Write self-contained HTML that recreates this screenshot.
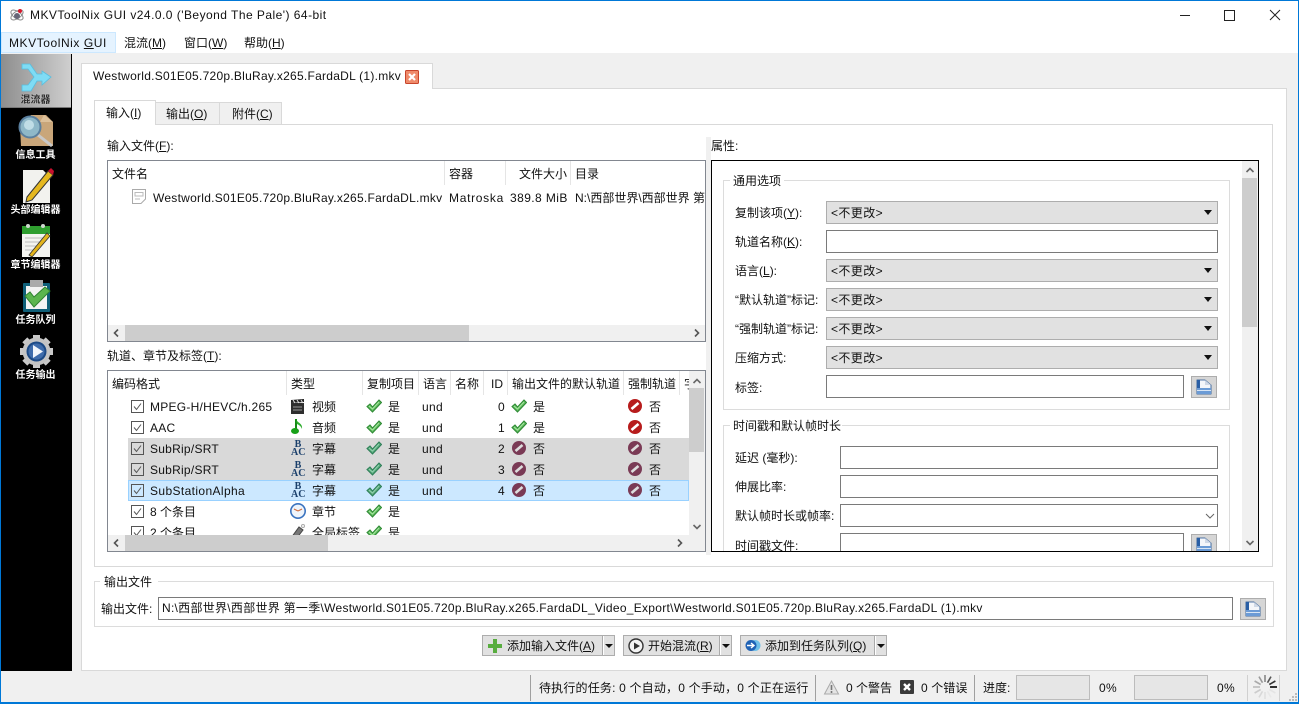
<!DOCTYPE html>
<html><head><meta charset="utf-8"><title>MKVToolNix GUI</title>
<style>
html,body{margin:0;padding:0;width:1299px;height:704px;overflow:hidden;background:#f0f0f0}
body{position:relative;font-family:"Liberation Sans","Noto Sans CJK SC",sans-serif;font-size:12px;color:#111}
.a{position:absolute;box-sizing:border-box}
.t{position:absolute;white-space:nowrap;line-height:16px;font-size:12px;color:#111}
.tr .t{margin-top:1px}
.l{position:absolute;left:0;top:0;width:1299px;height:704px}
.s{position:absolute;left:0;width:71px;text-align:center;font-size:10px;line-height:13px;color:#fff;font-weight:bold;white-space:nowrap}
.c{position:absolute;box-sizing:border-box;left:826px;width:392px;height:23px;background:#e1e1e1;border:1px solid #adadad}
.c span{position:absolute;left:4px;top:3px;line-height:16px;font-size:12px;letter-spacing:.4px}
.c i{position:absolute;right:5px;top:8px;width:0;height:0;border:4px solid transparent;border-top:5px solid #111;border-bottom:0}
.i{position:absolute;box-sizing:border-box;height:23px;background:#fff;border:1px solid #7a7a7a}
.b{position:absolute;box-sizing:border-box;background:#e1e1e1;border:1px solid #adadad}
.bb{position:absolute;box-sizing:border-box;background:#d6d6d6;border:1px solid #adadad}
.sep{position:absolute;width:1px;background:#e5e5e5}
.ck{position:absolute;box-sizing:border-box;width:13px;height:13px;border:1px solid #555;background:transparent}
.g{position:absolute;box-sizing:border-box;border:1px solid #dcdcdc}
.ac{position:absolute;left:291px;width:14px;text-align:center;white-space:nowrap;font:bold 10px/8px "Liberation Serif",serif;color:#1a3f6b}
svg{position:absolute;overflow:visible}
u{text-underline-offset:1px}
</style></head><body>
<svg width="0" height="0" style="position:absolute">
<defs>
<symbol id="yes" viewBox="0 0 16 14"><path d="M1 7.5 L4 5 L6.5 8 L13 1 L15.5 3.5 L6.5 13 Z" fill="#5cb85c" stroke="#2f8a35" stroke-width="1"/><path d="M3 7 L6.5 10 L13 3" fill="none" stroke="#a8e8a0" stroke-width="1"/></symbol>
<symbol id="yesg" viewBox="0 0 16 14"><path d="M1 7.5 L4 5 L6.5 8 L13 1 L15.5 3.5 L6.5 13 Z" fill="#55a878" stroke="#2e7f58" stroke-width="1"/><path d="M3 7 L6.5 10 L13 3" fill="none" stroke="#95d2b0" stroke-width="1"/></symbol>
<symbol id="no" viewBox="0 0 14 14"><circle cx="7" cy="7" r="7" fill="#b71c1c"/><path d="M3.5 10 L10.5 4" stroke="#fff" stroke-width="2.6"/></symbol>
<symbol id="nog" viewBox="0 0 14 14"><circle cx="7" cy="7" r="7" fill="#7a3a55"/><path d="M3.5 10 L10.5 4" stroke="#ddd" stroke-width="2.6"/></symbol>
<symbol id="br" viewBox="0 0 16 16"><path d="M1 1 H9 L15 6 V15 H1 Z" fill="#f4f6fa" stroke="#1f4f8e" stroke-width="0.8"/><path d="M1 1 H4 V9 H1 Z" fill="#2a5fa5"/><path d="M9 1 L9 6 L15 6 Z" fill="#cfd8e6"/><path d="M1 9 H15 V15 H1 Z" fill="#6b9bd6"/><path d="M1 11.5 H15" stroke="#d9e6f5" stroke-width="1"/></symbol>
</defs>
</svg>

<!-- frame -->
<div class="a" style="left:0;top:0;width:1299px;height:32px;background:#fff"></div>
<div class="a" style="left:0;top:32px;width:1299px;height:21px;background:#fff"></div>
<div class="a" style="left:1px;top:32px;width:115px;height:21px;background:#e5f3ff;border:1px solid #cce8ff"></div>

<svg style="left:9px;top:7px" width="16" height="16" viewBox="0 0 16 16"><ellipse cx="8" cy="8" rx="7" ry="3.5" fill="none" stroke="#888" transform="rotate(35 8 8)"/><ellipse cx="8" cy="8" rx="7" ry="3.5" fill="none" stroke="#888" transform="rotate(-35 8 8)"/><circle cx="8" cy="9" r="3" fill="#667"/><circle cx="11" cy="4" r="2" fill="#d8182c"/></svg>
<div class="t" style="left:30px;top:7px;letter-spacing:.465px">MKVToolNix GUI v24.0.0 ('Beyond The Pale') 64-bit</div>
<svg style="left:1170px;top:0" width="129" height="32" viewBox="0 0 129 32"><path d="M10 15.5 H20" stroke="#222"/><path d="M54.5 10.5 h10 v10 h-10 z" fill="none" stroke="#222"/><path d="M100 10 L110 20 M110 10 L100 20" stroke="#222"/></svg>

<div class="t" style="left:9px;top:35px;letter-spacing:.56px">MKVToolNix <u>G</u>UI</div>
<div class="t" style="left:124px;top:35px">混流(<u>M</u>)</div>
<div class="t" style="left:184px;top:35px">窗口(<u>W</u>)</div>
<div class="t" style="left:244px;top:35px">帮助(<u>H</u>)</div>

<!-- sidebar -->
<div class="a" style="left:1px;top:54px;width:71px;height:617px;background:#000"></div>
<div class="a" style="left:1px;top:54px;width:70px;height:54px;background:linear-gradient(90deg,#8e8e8e,#cfcfcf);border-bottom:1px solid #777"></div>
<svg style="left:0;top:0" width="72" height="100" viewBox="0 0 72 100"><path d="M22 64 H30 L37 74 H42 V71 L51 77 L42 85 V81 H37 L31 91 H22 V85 H28 L34 77 L28 69 H22 Z" fill="#7fdcf5" stroke="#55bfe0" stroke-width=".8"/></svg>
<div class="s" style="top:94px;color:#2c2c2c;text-shadow:0 0 1px #eee">混流器</div>

<svg style="left:18px;top:114px" width="36" height="35" viewBox="0 0 36 35"><path d="M13 1 H28 L35 8 V32 H3 L2 13 Z" fill="#c9a67a"/><path d="M26 1 L35 8 H22 Z" fill="#dcc09a"/><path d="M20 21 L34 32" stroke="#c8c8c8" stroke-width="3"/><circle cx="12" cy="13" r="10.5" fill="#8fb8c8" stroke="#5a7f9e" stroke-width="2"/><circle cx="11" cy="11" r="5" fill="#c0dde6"/></svg>
<div class="s" style="top:149px">信息工具</div>

<svg style="left:21px;top:167px" width="34" height="36" viewBox="0 0 34 36"><path d="M2 3 H22 L29 10 V36 H2 Z" fill="#f2f2ee"/><path d="M6 30 L27 4 L32 8 L11 33 L5 35 Z" fill="#e5b820" stroke="#333" stroke-width="1"/><path d="M27 4 L32 8 L33 4 L30 1 Z" fill="#c8102e"/></svg>
<div class="s" style="top:204px">头部编辑器</div>

<svg style="left:21px;top:224px" width="31" height="33" viewBox="0 0 31 33"><rect x="1" y="2" width="28" height="31" fill="#f4f4f0"/><rect x="1" y="2" width="28" height="8" fill="#2f9e2f"/><circle cx="7" cy="2" r="2" fill="#cfd8cf"/><circle cx="22" cy="2" r="2" fill="#cfd8cf"/><path d="M4 14 H26 M4 18 H24 M4 22 H20 M4 26 H17" stroke="#bbb"/><path d="M8 31 L26 9 L29 12 L11 33 Z" fill="#e3b41c" stroke="#333" stroke-width=".8"/></svg>
<div class="s" style="top:259px">章节编辑器</div>

<svg style="left:21px;top:279px" width="31" height="34" viewBox="0 0 31 34"><rect x="2" y="4" width="27" height="29" fill="#0f5f78" rx="1"/><rect x="5" y="7" width="21" height="23" fill="#f3f3f3"/><rect x="9" y="1" width="13" height="7" fill="#aaa"/><path d="M4 17 L9 13 L13 18 L24 8 L29 12 L13 28 Z" fill="#5bb54e" stroke="#2f8230"/></svg>
<div class="s" style="top:314px">任务队列</div>

<svg style="left:19px;top:334px" width="35" height="35" viewBox="0 0 35 35"><path d="M17.5 1 V34 M1 17.5 H34 M5.8 5.8 L29.2 29.2 M29.2 5.8 L5.8 29.2" stroke="#c9c9c9" stroke-width="7"/><circle cx="17.5" cy="17.5" r="14" fill="#c4c4c4"/><circle cx="17.5" cy="17.5" r="10" fill="#1c4a86"/><circle cx="17.5" cy="17.5" r="8" fill="#3f6cab"/><path d="M14 11 L24 17.5 L14 24 Z" fill="#f2f6fb"/></svg>
<div class="s" style="top:369px">任务输出</div>

<!-- main tab -->
<div class="a" style="left:81px;top:88px;width:1206px;height:583px;background:#fff;border:1px solid #d9d9d9"></div>
<div class="a" style="left:81px;top:63px;width:352px;height:26px;background:#fff;border:1px solid #d9d9d9;border-bottom:0"></div>
<div class="t" style="left:93px;top:68px;letter-spacing:.26px">Westworld.S01E05.720p.BluRay.x265.FardaDL (1).mkv</div>
<svg style="left:405px;top:70px" width="14" height="14" viewBox="0 0 14 14"><rect x=".5" y=".5" width="13" height="13" rx="1" fill="#ef8a6a" stroke="#c8452b"/><path d="M4 4 L10 10 M10 4 L4 10" stroke="#fff" stroke-width="2.2"/></svg>

<!-- inner tabs -->
<div class="a" style="left:94px;top:124px;width:1179px;height:443px;background:#fff;border:1px solid #d9d9d9"></div>
<div class="a" style="left:155px;top:102px;width:65px;height:23px;background:#f0f0f0;border:1px solid #d9d9d9"></div>
<div class="a" style="left:219px;top:102px;width:63px;height:23px;background:#f0f0f0;border:1px solid #d9d9d9"></div>
<div class="a" style="left:94px;top:100px;width:62px;height:25px;background:#fff;border:1px solid #d9d9d9;border-bottom:0"></div>
<div class="t" style="left:106px;top:105px">输入(<u>I</u>)</div>
<div class="t" style="left:166px;top:106px">输出(<u>O</u>)</div>
<div class="t" style="left:232px;top:106px">附件(<u>C</u>)</div>

<!-- splitter -->
<div class="a" style="left:706px;top:137px;width:5px;height:418px;background:#f0f0f0"></div>

<!-- input files -->
<div class="t" style="left:107px;top:138px">输入文件(<u>F</u>):</div>
<div class="a" style="left:107px;top:160px;width:599px;height:182px;background:#fff;border:1px solid #828790"></div>
<div class="sep" style="left:444px;top:161px;height:24px"></div>
<div class="sep" style="left:505px;top:161px;height:24px"></div>
<div class="sep" style="left:570px;top:161px;height:24px"></div>
<div class="t" style="left:112px;top:166px">文件名</div>
<div class="t" style="left:449px;top:166px">容器</div>
<div class="t" style="left:519px;top:166px">文件大小</div>
<div class="t" style="left:575px;top:166px">目录</div>
<svg style="left:132px;top:189px" width="14" height="15" viewBox="0 0 14 15"><path d="M.5 .5 H13.5 V10 L9 14.5 H.5 Z" fill="#fff" stroke="#aaa"/><path d="M3 3.5 H11 V7 H3 Z" fill="none" stroke="#bbb"/><path d="M3 10 H8" stroke="#bbb"/></svg>
<div class="t" style="left:153px;top:190px;letter-spacing:.26px">Westworld.S01E05.720p.BluRay.x265.FardaDL.mkv</div>
<div class="t" style="left:449px;top:190px;letter-spacing:.7px">Matroska</div>
<div class="t" style="left:510px;top:190px;letter-spacing:.42px">389.8 MiB</div>
<div class="l" style="clip-path:inset(161px 594px 500px 570px)"><div class="t" style="left:575px;top:190px">N:\西部世界\西部世界 第一季\Westworld</div></div>
<div class="a" style="left:108px;top:325px;width:597px;height:16px;background:#f0f0f0"></div>
<div class="a" style="left:125px;top:325px;width:344px;height:16px;background:#cdcdcd"></div>
<svg style="left:113px;top:329px" width="6" height="8" viewBox="0 0 6 8"><path d="M5 .5 L1.5 4 L5 7.5" fill="none" stroke="#555" stroke-width="1.6"/></svg>
<svg style="left:694px;top:329px" width="6" height="8" viewBox="0 0 6 8"><path d="M1 .5 L4.5 4 L1 7.5" fill="none" stroke="#555" stroke-width="1.6"/></svg>

<!-- tracks -->
<div class="t" style="left:107px;top:348px">轨道、章节及标签(<u>T</u>):</div>
<div class="a" style="left:107px;top:370px;width:599px;height:182px;background:#fff;border:1px solid #828790"></div>
<div class="a" style="left:128px;top:438px;width:561px;height:42px;background:#d9d9d9"></div>
<div class="a" style="left:128px;top:480px;width:561px;height:21px;background:#cce8ff;border:1px solid #99d1ff"></div>
<div class="l tr" style="clip-path:inset(371px 610px 169px 108px)">
<div class="sep" style="left:286px;top:371px;height:24px"></div>
<div class="sep" style="left:362px;top:371px;height:24px"></div>
<div class="sep" style="left:418px;top:371px;height:24px"></div>
<div class="sep" style="left:450px;top:371px;height:24px"></div>
<div class="sep" style="left:483px;top:371px;height:24px"></div>
<div class="sep" style="left:507px;top:371px;height:24px"></div>
<div class="sep" style="left:623px;top:371px;height:24px"></div>
<div class="sep" style="left:679px;top:371px;height:24px"></div>
<div class="t" style="left:112px;top:375px">编码格式</div>
<div class="t" style="left:291px;top:375px">类型</div>
<div class="t" style="left:367px;top:375px">复制项目</div>
<div class="t" style="left:423px;top:375px">语言</div>
<div class="t" style="left:455px;top:375px">名称</div>
<div class="t" style="left:491px;top:375px">ID</div>
<div class="t" style="left:512px;top:375px">输出文件的默认轨道</div>
<div class="t" style="left:628px;top:375px">强制轨道</div>
<div class="t" style="left:684px;top:375px">字幕</div>

<!-- checkboxes -->
<div class="ck" style="left:131px;top:400px"></div><div class="ck" style="left:131px;top:421px"></div><div class="ck" style="left:131px;top:442px"></div><div class="ck" style="left:131px;top:463px"></div><div class="ck" style="left:131px;top:484px"></div><div class="ck" style="left:131px;top:505px"></div><div class="ck" style="left:131px;top:526px"></div>
<svg style="left:131px;top:400px" width="13" height="139" viewBox="0 0 13 139" fill="none" stroke="#555" stroke-width="1"><path d="M3 6.5 L5.5 9.5 L10 3.5"/><path d="M3 27.5 L5.5 30.5 L10 24.5"/><path d="M3 48.5 L5.5 51.5 L10 45.5"/><path d="M3 69.5 L5.5 72.5 L10 66.5"/><path d="M3 90.5 L5.5 93.5 L10 87.5"/><path d="M3 111.5 L5.5 114.5 L10 108.5"/><path d="M3 132.5 L5.5 135.5 L10 129.5"/></svg>

<div class="t" style="left:150px;top:398px;letter-spacing:.25px">MPEG-H/HEVC/h.265</div>
<div class="t" style="left:150px;top:419px;letter-spacing:.25px">AAC</div>
<div class="t" style="left:150px;top:440px;letter-spacing:.25px">SubRip/SRT</div>
<div class="t" style="left:150px;top:461px;letter-spacing:.25px">SubRip/SRT</div>
<div class="t" style="left:150px;top:482px;letter-spacing:.38px">SubStationAlpha</div>
<div class="t" style="left:150px;top:503px">8 个条目</div>
<div class="t" style="left:150px;top:524px">2 个条目</div>

<!-- type icons -->
<svg style="left:291px;top:399px" width="14" height="15" viewBox="0 0 14 15"><rect x="0" y="4" width="13" height="11" fill="#2e2e2e"/><path d="M0 1 L13 0 V3 L0 4 Z" fill="#222"/><path d="M2 1 L4 4 M6 1 L8 4 M10 1 L12 4" stroke="#ddd"/><path d="M2 8 H11 M2 11 H11" stroke="#999"/></svg>
<svg style="left:291px;top:418px" width="14" height="17" viewBox="0 0 14 17"><path d="M5 1 V12" stroke="#178a17" stroke-width="2"/><path d="M5 1 C6 5 12 5 11 11 C10 8 8 7 6 6" fill="#2fae2f"/><ellipse cx="4" cy="13" rx="4" ry="3" fill="#18a018"/></svg>
<div class="ac" style="top:441px">B<br>AC</div>
<div class="ac" style="top:462px">B<br>AC</div>
<div class="ac" style="top:483px">B<br>AC</div>
<svg style="left:290px;top:503px" width="16" height="16" viewBox="0 0 16 16"><circle cx="8" cy="8" r="7.2" fill="#eef4fb" stroke="#3a73c0" stroke-width="1.6"/><path d="M8 8 L4 6 M8 8 L12 6" stroke="#d06a3a"/></svg>
<svg style="left:290px;top:524px" width="16" height="15" viewBox="0 0 16 15"><path d="M1 14 L9 3 L13 6 L6 15 Z" fill="#777" stroke="#444"/><circle cx="13" cy="2" r="1.5" fill="none" stroke="#aaa"/></svg>

<div class="t" style="left:312px;top:398px">视频</div>
<div class="t" style="left:312px;top:419px">音频</div>
<div class="t" style="left:312px;top:440px">字幕</div>
<div class="t" style="left:312px;top:461px">字幕</div>
<div class="t" style="left:312px;top:482px">字幕</div>
<div class="t" style="left:312px;top:503px">章节</div>
<div class="t" style="left:312px;top:524px">全局标签</div>

<!-- copy -->
<svg style="left:366px;top:399px" width="16" height="14"><use href="#yes"/></svg>
<svg style="left:366px;top:420px" width="16" height="14"><use href="#yes"/></svg>
<svg style="left:366px;top:441px" width="16" height="14"><use href="#yesg"/></svg>
<svg style="left:366px;top:462px" width="16" height="14"><use href="#yesg"/></svg>
<svg style="left:366px;top:483px" width="16" height="14"><use href="#yesg"/></svg>
<svg style="left:366px;top:504px" width="16" height="14"><use href="#yes"/></svg>
<svg style="left:366px;top:525px" width="16" height="14"><use href="#yes"/></svg>
<div class="t" style="left:388px;top:398px">是</div><div class="t" style="left:388px;top:419px">是</div><div class="t" style="left:388px;top:440px">是</div><div class="t" style="left:388px;top:461px">是</div><div class="t" style="left:388px;top:482px">是</div><div class="t" style="left:388px;top:503px">是</div><div class="t" style="left:388px;top:524px">是</div>

<div class="t" style="left:422px;top:398px;letter-spacing:.3px">und</div><div class="t" style="left:422px;top:419px;letter-spacing:.3px">und</div><div class="t" style="left:422px;top:440px;letter-spacing:.3px">und</div><div class="t" style="left:422px;top:461px;letter-spacing:.3px">und</div><div class="t" style="left:422px;top:482px;letter-spacing:.3px">und</div>

<div class="t" style="left:498px;top:398px">0</div><div class="t" style="left:498px;top:419px">1</div><div class="t" style="left:498px;top:440px">2</div><div class="t" style="left:498px;top:461px">3</div><div class="t" style="left:498px;top:482px">4</div>

<svg style="left:511px;top:399px" width="16" height="14"><use href="#yes"/></svg>
<svg style="left:511px;top:420px" width="16" height="14"><use href="#yes"/></svg>
<svg style="left:512px;top:441px" width="14" height="14"><use href="#nog"/></svg>
<svg style="left:512px;top:462px" width="14" height="14"><use href="#nog"/></svg>
<svg style="left:512px;top:483px" width="14" height="14"><use href="#nog"/></svg>
<div class="t" style="left:533px;top:398px">是</div><div class="t" style="left:533px;top:419px">是</div><div class="t" style="left:533px;top:440px">否</div><div class="t" style="left:533px;top:461px">否</div><div class="t" style="left:533px;top:482px">否</div>

<svg style="left:628px;top:399px" width="14" height="14"><use href="#no"/></svg>
<svg style="left:628px;top:420px" width="14" height="14"><use href="#no"/></svg>
<svg style="left:628px;top:441px" width="14" height="14"><use href="#nog"/></svg>
<svg style="left:628px;top:462px" width="14" height="14"><use href="#nog"/></svg>
<svg style="left:628px;top:483px" width="14" height="14"><use href="#nog"/></svg>
<div class="t" style="left:649px;top:398px">否</div><div class="t" style="left:649px;top:419px">否</div><div class="t" style="left:649px;top:440px">否</div><div class="t" style="left:649px;top:461px">否</div><div class="t" style="left:649px;top:482px">否</div>
</div>
<!-- track scrollbars -->
<div class="a" style="left:689px;top:371px;width:16px;height:180px;background:#f0f0f0"></div>
<div class="a" style="left:689px;top:388px;width:15px;height:64px;background:#cdcdcd"></div>
<div class="a" style="left:108px;top:535px;width:597px;height:16px;background:#f0f0f0"></div>
<div class="a" style="left:125px;top:535px;width:203px;height:16px;background:#cdcdcd"></div>
<svg style="left:693px;top:378px" width="8" height="6" viewBox="0 0 8 6"><path d="M.5 5 L4 1.5 L7.5 5" fill="none" stroke="#666" stroke-width="1.6"/></svg>
<svg style="left:693px;top:524px" width="8" height="6" viewBox="0 0 8 6"><path d="M.5 1 L4 4.5 L7.5 1" fill="none" stroke="#666" stroke-width="1.6"/></svg>
<svg style="left:113px;top:539px" width="6" height="8" viewBox="0 0 6 8"><path d="M5 .5 L1.5 4 L5 7.5" fill="none" stroke="#555" stroke-width="1.6"/></svg>
<svg style="left:677px;top:539px" width="6" height="8" viewBox="0 0 6 8"><path d="M1 .5 L4.5 4 L1 7.5" fill="none" stroke="#555" stroke-width="1.6"/></svg>

<!-- properties -->
<div class="t" style="left:711px;top:138px">属性:</div>
<div class="a" style="left:711px;top:160px;width:548px;height:392px;background:#fff;border:1px solid #000"></div>
<div class="l" style="clip-path:inset(161px 57px 153px 712px)">
<div class="g" style="left:723px;top:180px;width:507px;height:230px"></div>
<div class="a" style="left:730px;top:175px;width:54px;height:12px;background:#fff"></div>
<div class="t" style="left:733px;top:173px">通用选项</div>
<div class="t" style="left:735px;top:205px">复制该项(<u>Y</u>):</div>
<div class="t" style="left:735px;top:234px">轨道名称(<u>K</u>):</div>
<div class="t" style="left:735px;top:263px">语言(<u>L</u>):</div>
<div class="t" style="left:735px;top:292px">“默认轨道”标记:</div>
<div class="t" style="left:735px;top:321px">“强制轨道”标记:</div>
<div class="t" style="left:735px;top:350px">压缩方式:</div>
<div class="t" style="left:735px;top:380px">标签:</div>
<div class="c" style="top:201px"><span>&lt;不更改&gt;</span><i></i></div>
<div class="i" style="left:826px;top:230px;width:392px"></div>
<div class="c" style="top:259px"><span>&lt;不更改&gt;</span><i></i></div>
<div class="c" style="top:288px"><span>&lt;不更改&gt;</span><i></i></div>
<div class="c" style="top:317px"><span>&lt;不更改&gt;</span><i></i></div>
<div class="c" style="top:346px"><span>&lt;不更改&gt;</span><i></i></div>
<div class="i" style="left:826px;top:375px;width:358px"></div>
<div class="bb" style="left:1191px;top:376px;width:26px;height:22px"></div>
<svg style="left:1196px;top:379px" width="16" height="16"><use href="#br"/></svg>

<div class="g" style="left:723px;top:425px;width:507px;height:180px"></div>
<div class="a" style="left:730px;top:420px;width:112px;height:12px;background:#fff"></div>
<div class="t" style="left:733px;top:418px">时间戳和默认帧时长</div>
<div class="t" style="left:735px;top:450px">延迟 (毫秒):</div>
<div class="t" style="left:735px;top:479px">伸展比率:</div>
<div class="t" style="left:735px;top:508px">默认帧时长或帧率:</div>
<div class="t" style="left:735px;top:538px">时间戳文件:</div>
<div class="i" style="left:840px;top:446px;width:378px"></div>
<div class="i" style="left:840px;top:475px;width:378px"></div>
<div class="i" style="left:840px;top:504px;width:378px"></div>
<svg style="left:1205px;top:513px" width="10" height="6" viewBox="0 0 10 6"><path d="M1 1 L5 5 L9 1" fill="none" stroke="#666"/></svg>
<div class="i" style="left:840px;top:533px;width:344px"></div>
<div class="bb" style="left:1191px;top:534px;width:26px;height:22px"></div>
<svg style="left:1196px;top:537px" width="16" height="16"><use href="#br"/></svg>
</div>
<div class="a" style="left:1242px;top:161px;width:16px;height:390px;background:#f0f0f0"></div>
<div class="a" style="left:1242px;top:178px;width:15px;height:149px;background:#cdcdcd"></div>
<svg style="left:1246px;top:167px" width="8" height="6" viewBox="0 0 8 6"><path d="M.5 5 L4 1.5 L7.5 5" fill="none" stroke="#666" stroke-width="1.6"/></svg>
<svg style="left:1246px;top:540px" width="8" height="6" viewBox="0 0 8 6"><path d="M.5 1 L4 4.5 L7.5 1" fill="none" stroke="#666" stroke-width="1.6"/></svg>

<!-- output file -->
<div class="g" style="left:94px;top:581px;width:1180px;height:46px"></div>
<div class="a" style="left:100px;top:576px;width:58px;height:12px;background:#fff"></div>
<div class="t" style="left:104px;top:574px">输出文件</div>
<div class="t" style="left:101px;top:601px">输出文件:</div>
<div class="i" style="left:158px;top:597px;width:1075px"></div>
<div class="t" style="left:162px;top:600px;letter-spacing:.28px">N:\西部世界\西部世界 第一季\Westworld.S01E05.720p.BluRay.x265.FardaDL_Video_Export\Westworld.S01E05.720p.BluRay.x265.FardaDL (1).mkv</div>
<div class="bb" style="left:1240px;top:598px;width:26px;height:22px"></div>
<svg style="left:1245px;top:601px" width="16" height="16"><use href="#br"/></svg>

<!-- action buttons -->
<div class="b" style="left:482px;top:635px;width:133px;height:21px"></div>
<div class="a" style="left:602px;top:636px;width:2px;height:19px;background:#fff;border-left:1px solid #aaa"></div>
<svg style="left:488px;top:639px" width="14" height="14" viewBox="0 0 14 14"><path d="M5 0 H9 V5 H14 V9 H9 V14 H5 V9 H0 V5 H5 Z" fill="#58ad3f"/></svg>
<div class="t" style="left:507px;top:638px">添加输入文件(<u>A</u>)</div>
<div class="a" style="left:605px;top:644px;width:0;height:0;border:4px solid transparent;border-top:4px solid #111;border-bottom:0"></div>

<div class="b" style="left:623px;top:635px;width:109px;height:21px"></div>
<div class="a" style="left:719px;top:636px;width:2px;height:19px;background:#fff;border-left:1px solid #aaa"></div>
<svg style="left:628px;top:638px" width="16" height="16" viewBox="0 0 16 16"><circle cx="8" cy="8" r="7" fill="#f4f4f4" stroke="#333" stroke-width="1.4"/><path d="M6 4.5 L12 8 L6 11.5 Z" fill="#333"/></svg>
<div class="t" style="left:648px;top:638px">开始混流(<u>R</u>)</div>
<div class="a" style="left:722px;top:644px;width:0;height:0;border:4px solid transparent;border-top:4px solid #111;border-bottom:0"></div>

<div class="b" style="left:740px;top:635px;width:147px;height:21px"></div>
<div class="a" style="left:874px;top:636px;width:2px;height:19px;background:#fff;border-left:1px solid #aaa"></div>
<svg style="left:745px;top:639px" width="16" height="13" viewBox="0 0 16 13"><circle cx="10" cy="6.5" r="5.5" fill="#6fc0e8"/><circle cx="6" cy="6.5" r="5.5" fill="#1f62b5"/><path d="M2 6.5 H8 M6 4 L9 6.5 L6 9" stroke="#fff" stroke-width="1.4" fill="none"/></svg>
<div class="t" style="left:765px;top:638px">添加到任务队列(<u>Q</u>)</div>
<div class="a" style="left:877px;top:644px;width:0;height:0;border:4px solid transparent;border-top:4px solid #111;border-bottom:0"></div>

<!-- status bar -->
<div class="sep" style="left:530px;top:675px;height:26px;background:#a0a0a0"></div>
<div class="sep" style="left:815px;top:675px;height:26px;background:#a0a0a0"></div>
<div class="sep" style="left:974px;top:675px;height:26px;background:#a0a0a0"></div>
<div class="sep" style="left:1247px;top:675px;height:26px;background:#d0d0d0"></div>
<div class="sep" style="left:1279px;top:675px;height:26px;background:#d0d0d0"></div>
<div class="t" style="left:539px;top:680px;letter-spacing:.18px">待执行的任务: 0 个自动，0 个手动，0 个正在运行</div>
<svg style="left:824px;top:680px" width="15" height="15" viewBox="0 0 15 15"><path d="M7.5 1 L14.5 14 H.5 Z" fill="#e4e4e4" stroke="#aaa"/><path d="M7.5 5 V10 M7.5 11 V13" stroke="#777" stroke-width="1.6"/></svg>
<div class="t" style="left:846px;top:680px">0 个警告</div>
<svg style="left:900px;top:680px" width="14" height="14" viewBox="0 0 14 14"><rect width="14" height="14" rx="1" fill="#3a3a3a"/><path d="M4 4 L10 10 M10 4 L4 10" stroke="#fff" stroke-width="2.4"/></svg>
<div class="t" style="left:921px;top:680px;letter-spacing:.1px">0 个错误</div>
<div class="t" style="left:983px;top:680px">进度:</div>
<div class="a" style="left:1016px;top:675px;width:74px;height:25px;background:#e6e6e6;border:1px solid #bcbcbc"></div>
<div class="t" style="left:1099px;top:680px;letter-spacing:.3px">0%</div>
<div class="a" style="left:1134px;top:675px;width:74px;height:25px;background:#e6e6e6;border:1px solid #bcbcbc"></div>
<div class="t" style="left:1217px;top:680px;letter-spacing:.3px">0%</div>
<svg style="left:1252px;top:674px" width="26" height="26" viewBox="0 0 26 26" stroke-width="1.6" fill="none"><path d="M13 8 V1" stroke="#888"/><path d="M15.5 8.67 L19 2.6" stroke="#555"/><path d="M17.33 10.5 L23.4 7" stroke="#333"/><path d="M18 13 H25" stroke="#000"/><path d="M17.33 15.5 L23.4 19" stroke="#e4e4e4"/><path d="M15.5 17.33 L19 23.4" stroke="#e8e8e8"/><path d="M13 18 V25" stroke="#e0e0e0"/><path d="M10.5 17.33 L7 23.4" stroke="#d8d8d8"/><path d="M8.67 15.5 L2.6 19" stroke="#ccc"/><path d="M8 13 H1" stroke="#bbb"/><path d="M8.67 10.5 L2.6 7" stroke="#aaa"/><path d="M10.5 8.67 L7 2.6" stroke="#999"/></svg>
<svg style="left:1288px;top:692px" width="10" height="10" viewBox="0 0 10 10" fill="#bbb"><rect x="7" y="1" width="2" height="2"/><rect x="4" y="4" width="2" height="2"/><rect x="7" y="4" width="2" height="2"/><rect x="1" y="7" width="2" height="2"/><rect x="4" y="7" width="2" height="2"/><rect x="7" y="7" width="2" height="2"/></svg>

<!-- window border -->
<div class="a" style="left:0;top:0;width:1299px;height:1px;background:#0078d7"></div>
<div class="a" style="left:0;top:0;width:1px;height:704px;background:#0078d7"></div>
<div class="a" style="left:1298px;top:0;width:1px;height:704px;background:#0078d7"></div>
<div class="a" style="left:0;top:702px;width:1299px;height:2px;background:#0078d7"></div>
</body></html>
